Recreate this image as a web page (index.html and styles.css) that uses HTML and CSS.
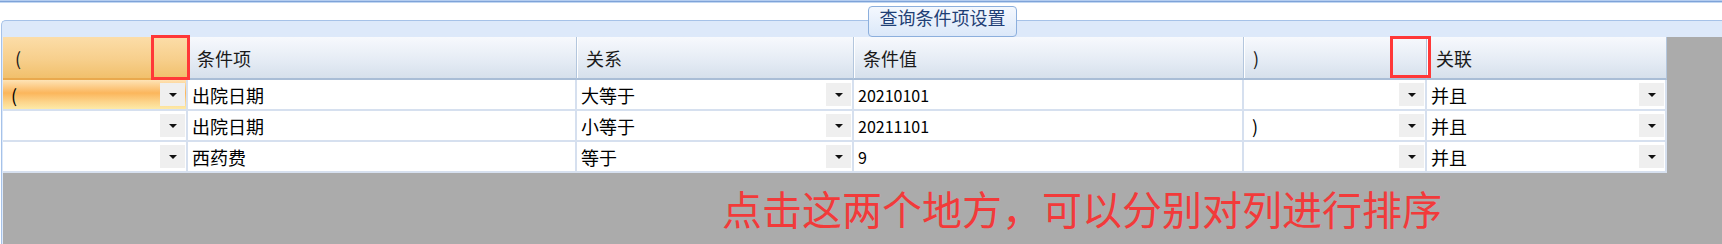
FILE: index.html
```html
<!DOCTYPE html>
<html lang="zh-CN">
<head>
<meta charset="utf-8">
<title>查询条件项设置</title>
<link rel="stylesheet" href="styles.css">
</head>
<body>
<div class="topbar"></div>
<div class="band"></div>
<div class="group">
  <div class="legend">查询条件项设置</div>
  <div class="canvas">
    <div class="grid">
      <div class="hd hd-sel">(</div>
      <div class="hd">条件项</div>
      <div class="hd">关系</div>
      <div class="hd">条件值</div>
      <div class="hd">)</div>
      <div class="hd">关联</div>

      <div class="cell sel"><span>(</span><i class="btn"></i></div>
      <div class="cell"><span>出院日期</span></div>
      <div class="cell"><span>大等于</span><i class="btn"></i></div>
      <div class="cell num"><span>20210101</span></div>
      <div class="cell"><span></span><i class="btn"></i></div>
      <div class="cell"><span>并且</span><i class="btn"></i></div>

      <div class="cell"><span></span><i class="btn"></i></div>
      <div class="cell"><span>出院日期</span></div>
      <div class="cell"><span>小等于</span><i class="btn"></i></div>
      <div class="cell num"><span>20211101</span></div>
      <div class="cell"><span class="paren">)</span><i class="btn"></i></div>
      <div class="cell"><span>并且</span><i class="btn"></i></div>

      <div class="cell"><span></span><i class="btn"></i></div>
      <div class="cell"><span>西药费</span></div>
      <div class="cell"><span>等于</span><i class="btn"></i></div>
      <div class="cell num"><span>9</span></div>
      <div class="cell"><span></span><i class="btn"></i></div>
      <div class="cell"><span>并且</span><i class="btn"></i></div>
    </div>
    <div class="note">点击这两个地方，可以分别对列进行排序</div>
  </div>
  <div class="mark mark-a"></div>
  <div class="mark mark-b"></div>
</div>
</body>
</html>
```

FILE: styles.css
```css
* { box-sizing: border-box; }
html, body {
  margin: 0;
  padding: 0;
  width: 1722px;
  height: 244px;
  overflow: hidden;
  background: #ffffff;
  font-family: "Noto Sans CJK SC", "Noto Sans", sans-serif;
}
.topbar {
  height: 3px;
  background: linear-gradient(#b4cdf0 0 1px, #7ea3d8 1px 2px, #c2d7f2 2px 3px);
}
.band {
  height: 17px;
  background: #ffffff;
}
.group {
  position: relative;
  margin-left: 1px;
  height: 224px;
  border-top: 1px solid #a6c2e8;
  border-left: 1px solid #a6c2e8;
  border-top-left-radius: 5px;
  background: #dde9fa;
  padding-top: 16px;
  padding-left: 1px;
}
.legend {
  position: absolute;
  left: 866px;
  top: -15px;
  width: 149px;
  height: 31px;
  border: 1px solid #8cafdd;
  border-radius: 4px;
  background: linear-gradient(#f4f8fe, #dbe8f9);
  color: #1f3f75;
  font-size: 18px;
  line-height: 20px;
  text-align: center;
}
.canvas {
  position: relative;
  height: 207px;
  background: #ababab;
}
.grid {
  display: grid;
  width: 1664px;
  grid-template-columns: 185px 389px 277px 390px 183px 240px;
  grid-template-rows: 43px 31px 31px 31px;
  font-size: 18px;
  color: #000;
  background: #fff;
}
.hd {
  display: flex;
  align-items: center;
  padding-left: 9px;
  background: linear-gradient(#f7f9fd, #e4ebf4 60%, #d6e0ec);
  border-bottom: 2px solid #a9bdd6;
  border-right: 1px solid #b3c6dd;
  box-shadow: inset 1px 0 0 #ffffff;
  color: #1a1a1a;
}
.hd-sel {
  padding-left: 12px;
  background: linear-gradient(#fcdda8, #f7cf8c 55%, #f1c06c);
  border-bottom: 2px solid #e9a94e;
  border-right: 1px solid #e5b060;
  box-shadow: none;
}
.cell {
  display: flex;
  align-items: center;
  justify-content: space-between;
  padding-left: 4px;
  padding-right: 1px;
  background: #ffffff;
  border-right: 2px solid #d6e0ef;
  border-bottom: 2px solid #d6e0ef;
  white-space: nowrap;
}
.cell.sel {
  padding-left: 8px;
  background: linear-gradient(#fee3b6, #fbb65c 45%, #fcd48a 75%, #fdeaa8);
}
.cell.num { font-size: 16px; }
.cell .paren { padding-left: 4px; }
.btn {
  flex: none;
  width: 25px;
  height: 23px;
  background: #efefef;
  display: flex;
  align-items: center;
  justify-content: center;
}
.btn::after {
  content: "";
  width: 0;
  height: 0;
  border-left: 4px solid transparent;
  border-right: 4px solid transparent;
  border-top: 4px solid #111;
  margin-top: 1px;
}
.note {
  position: absolute;
  left: 719px;
  top: 151px;
  font-size: 40px;
  line-height: 40px;
  color: #f23a3a;
  white-space: nowrap;
}
.mark {
  position: absolute;
  border: 3px solid #ff3838;
}
.mark-a {
  left: 149px;
  top: 14px;
  width: 39px;
  height: 45px;
}
.mark-b {
  left: 1388px;
  top: 15px;
  width: 41px;
  height: 42px;
}
```
